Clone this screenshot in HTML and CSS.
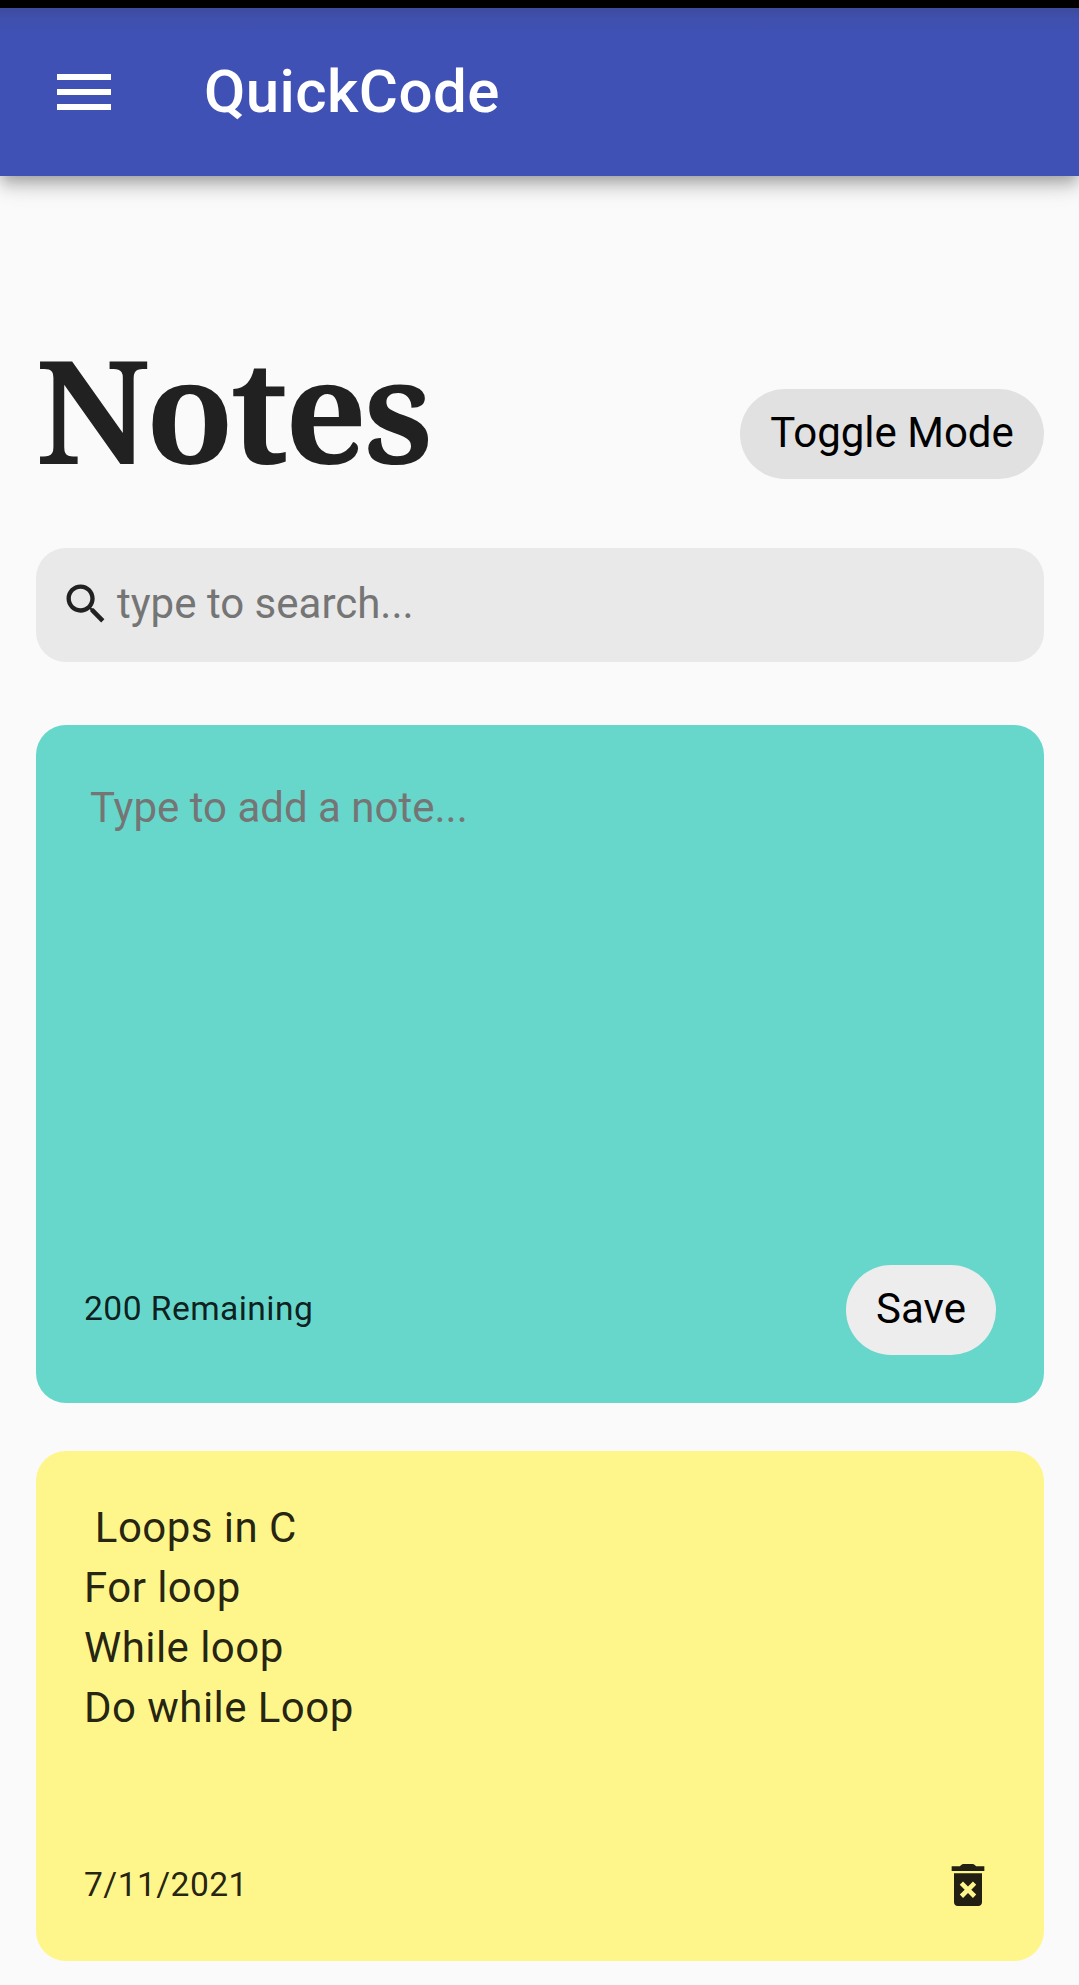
FILE: index.html
```
<!DOCTYPE html>
<html lang="en">
<head>
<meta charset="utf-8">
<title>QuickCode</title>
<link rel="stylesheet" href="styles.css">
</head>
<body>
<div class="status-strip"></div>
<header class="app-bar">
  <svg class="menu-icon" viewBox="0 0 24 24"><path d="M3 18h18v-2H3v2zm0-5h18v-2H3v2zm0-7v2h18V6H3z"/></svg>
  <span class="app-title">QuickCode</span>
</header>
<main class="container">
  <div class="heading">
    <h1 class="heading-title">Notes</h1>
    <button class="pill toggle">Toggle Mode</button>
  </div>
  <div class="search">
    <svg class="search-icon" viewBox="0 0 24 24"><path d="M15.5 14h-.79l-.28-.27C15.41 12.59 16 11.11 16 9.5 16 5.91 13.09 3 9.5 3S3 5.91 3 9.5 5.91 16 9.5 16c1.61 0 3.09-.59 4.23-1.57l.27.28v.79l5 4.99L20.49 19l-4.99-5zm-6 0C7.01 14 5 11.99 5 9.5S7.01 5 9.5 5 14 7.01 14 9.5 11.99 14 9.5 14z"/></svg>
    <span class="placeholder search-text">type to search...</span>
  </div>
  <section class="note note-new">
    <div class="placeholder note-input">Type to add a note...</div>
    <div class="note-footer">
      <small class="remaining">200 Remaining</small>
      <button class="pill save">Save</button>
    </div>
  </section>
  <section class="note note-saved">
    <div class="note-text"> Loops in C
For loop
While loop
Do while Loop</div>
    <div class="note-footer">
      <small class="date">7/11/2021</small>
      <svg class="delete-icon" viewBox="0 0 24 24"><path d="M6 19.4c0 .9.7 1.6 1.6 1.6h8.8c.9 0 1.6-.7 1.6-1.6V7H6v12.4zm2.46-7.52l1.41-1.41L12 12.59l2.12-2.12 1.41 1.41L13.41 14l2.12 2.12-1.41 1.41L12 15.41l-2.12 2.12-1.41-1.41L10.59 14l-2.13-2.12zM15.5 4l-.6-.6q-.4-.4-1-.4h-3.8q-.6 0-1 .4L8.500 4H5v2h14V4z"/></svg>
    </div>
  </section>
</main>
</body>
</html>
```
FILE: styles.css
```
* { box-sizing: border-box; }
body {
  margin: 0;
  background: #fafafa;
  color: rgba(0, 0, 0, .87);
  font: 400 42px/60px Roboto, sans-serif;
  letter-spacing: .45px;
  overflow: hidden;
}
.status-strip { height: 8px; background: #000; }
.app-bar {
  display: flex;
  align-items: center;
  height: 168px;
  padding: 0 48px;
  gap: 84px;
  color: #fff;
  background: linear-gradient(#3d4b9c 0, #3f50ad 10px, #3f51b5 28px);
  box-shadow: 0 6px 12px -3px rgba(0,0,0,.2), 0 12px 15px 0 rgba(0,0,0,.14), 0 3px 30px 0 rgba(0,0,0,.12);
}
.menu-icon { width: 72px; height: 72px; fill: currentColor; }
.app-title { font-size: 60px; font-weight: 500; line-height: 96px; letter-spacing: .45px; }
.container { display: flex; flex-direction: column; padding: 171px 35px 0 36px; }
.heading { display: flex; justify-content: space-between; align-items: flex-start; height: 173px; }
.heading-title {
  margin: 0;
  font: 700 144px/123px "Noto Serif", "Liberation Serif", serif;
  letter-spacing: -3.8px;
  color: #212121;
}
.pill {
  height: 90px;
  padding: 0 0 2px;
  border: 0;
  border-radius: 45px;
  color: #000;
  font: 400 42px/48px Roboto, sans-serif;
  text-align: center;
}
.toggle { width: 304px; align-self: center; background: #e1e1e1; }
.search {
  display: flex;
  align-items: center;
  height: 114px;
  margin-top: 28px;
  padding: 0 24px 2px;
  border-radius: 30px;
  background: #e9e9e9;
}
.search-icon { width: 52px; height: 52px; fill: #212121; }
.placeholder { color: #757575; font-size: 42px; line-height: 48px; letter-spacing: 0; }
.search-text { margin-left: 5px; }
.note {
  display: flex;
  flex-direction: column;
  justify-content: space-between;
  border-radius: 30px;
  padding: 47px 48px 48px;
}
.note-new { height: 678px; margin-top: 63px; background: #67d7cc; }
.note-input { padding: 12px 6px; }
.note-saved { height: 510px; margin-top: 48px; padding-bottom: 46px; background: #fef68a; }
.note-text { white-space: pre; }
.note-footer { display: flex; justify-content: space-between; align-items: center; }
.remaining, .date { font-size: 33.6px; line-height: 60px; }
.remaining { padding-bottom: 2px; }
.save { width: 150px; background: #ededed; }
.delete-icon { width: 56px; height: 56px; fill: currentColor; }
```
